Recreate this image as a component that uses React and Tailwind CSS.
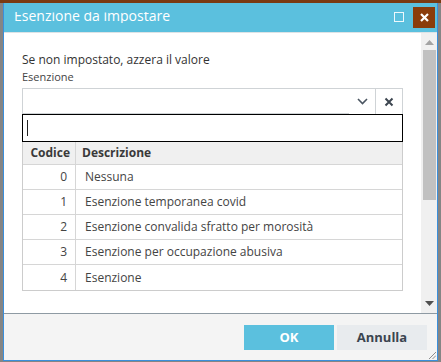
import React from "react";

const rows = [
  ["0", "Nessuna"],
  ["1", "Esenzione temporanea covid"],
  ["2", "Esenzione convalida sfratto per morosità"],
  ["3", "Esenzione per occupazione abusiva"],
  ["4", "Esenzione"],
];

export default function App() {
  return (
    <div
      className="w-[441px] h-[362px] overflow-hidden bg-[#858585]"
      style={{ fontFamily: '"Open Sans", "Noto Sans", sans-serif' }}
    >
      <div className="h-[3px] bg-[#7a3a12]" />
      <div className="pl-[3px]">
        <div className="w-[435px] h-[358px] flex flex-col border-x border-b border-[#3a8fdc] bg-white">
          {/* title bar */}
          <div className="h-[29px] shrink-0 bg-[#5bc0de] flex items-start">
            <div className="ml-[10px] mt-[9px] h-[11px] overflow-hidden">
              <div className="-mt-[5px] text-[14px] leading-[18px] text-white">
                Esenzione da impostare
              </div>
            </div>
            <div className="ml-auto mt-[9px] w-[10px] h-[10px] border-[1.5px] border-[#eef8fc]" />
            <div className="ml-[9px] mt-[4px] mr-[2px] w-[22px] h-[21px] bg-[#8a3c0b] flex items-center justify-center">
              <svg width="9" height="9" viewBox="0 0 9 9">
                <path d="M1 1 L8 8 M8 1 L1 8" stroke="white" strokeWidth="2.2" />
              </svg>
            </div>
          </div>
          <div className="h-px shrink-0 bg-[#dde3e6]" />
          {/* content */}
          <div className="h-[280px] shrink-0 flex">
            <div className="flex-1 pl-[18px] pr-[18px] pt-[18px]">
              <div className="text-[12px] leading-[17px] text-[#333]">
                Se non impostato, azzera il valore
              </div>
              <div className="text-[11px] leading-[15px] text-[#444] mt-[1px]">Esenzione</div>
              <div className="mt-[4px] h-[26px] border-t border-x border-[#cfd3d6] flex">
                <div className="flex-1 border-b border-[#cfd3d6]" />
                <div className="w-[26px] flex items-center justify-center">
                  <svg width="11" height="7" viewBox="0 0 11 7">
                    <path d="M1 1 L5.5 5.5 L10 1" fill="none" stroke="#4a5561" strokeWidth="1.6" />
                  </svg>
                </div>
                <div className="w-[27px] border-l border-[#cfd3d6] flex items-center justify-center">
                  <svg width="10" height="10" viewBox="0 0 10 10">
                    <path d="M1.5 1.5 L8.5 8.5 M8.5 1.5 L1.5 8.5" stroke="#3d4650" strokeWidth="2" />
                  </svg>
                </div>
              </div>
              <div className="h-[28px] border border-black flex items-center pl-[4px]">
                <div className="w-px h-[16px] bg-[#222]" />
              </div>
              <div className="border-x border-b border-[#cccccc] text-[12px]">
                <div className="flex h-[23px] bg-[#f0f0f0] border-b border-[#d6d6d6] font-bold text-[#3a3a3a]">
                  <div className="w-[53px] border-r border-[#d6d6d6] flex items-center justify-end pr-[5px]">
                    Codice
                  </div>
                  <div className="flex items-center pl-[6px]">Descrizione</div>
                </div>
                {rows.map(([c, d], i) => (
                  <div
                    key={c}
                    className={
                      "flex h-[25px] text-[#444] " +
                      (i < rows.length - 1 ? "border-b border-[#d6d6d6]" : "")
                    }
                  >
                    <div className="w-[53px] border-r border-[#d6d6d6] flex items-center justify-end pr-[8px]">
                      {c}
                    </div>
                    <div className="flex items-center pl-[9px]">{d}</div>
                  </div>
                ))}
              </div>
            </div>
            {/* scrollbar */}
            <div className="w-[16px] bg-[#f0f0f0] flex flex-col items-center">
              <svg className="mt-[7px]" width="9" height="5" viewBox="0 0 9 5">
                <path d="M0 5 L4.5 0 L9 5 Z" fill="#a3a3a3" />
              </svg>
              <div className="mt-[5px] w-[13px] h-[150px] bg-[#c1c1c1]" />
              <svg className="mt-auto mb-[7px]" width="9" height="5" viewBox="0 0 9 5">
                <path d="M0 0 L4.5 5 L9 0 Z" fill="#505050" />
              </svg>
            </div>
          </div>
          <div className="h-px shrink-0 bg-[#8e9aa3]" />
          {/* footer */}
          <div className="flex-1 bg-[#f4f4f4] relative flex justify-end items-start pt-[11px] pr-[10px] gap-[3px]">
            <div className="w-[90px] h-[25px] bg-[#5bc0de] text-white font-bold text-[13px] flex items-center justify-center">
              OK
            </div>
            <div className="w-[90px] h-[25px] bg-[#e8ebee] text-[#3b4550] font-bold text-[13px] flex items-center justify-center">
              Annulla
            </div>
            <svg className="absolute right-[1px] bottom-[1px]" width="7" height="7" viewBox="0 0 7 7">
              <path d="M7 0 L0 7 M7 3.5 L3.5 7" stroke="#8c8c8c" strokeWidth="1" />
            </svg>
          </div>
        </div>
      </div>
    </div>
  );
}
